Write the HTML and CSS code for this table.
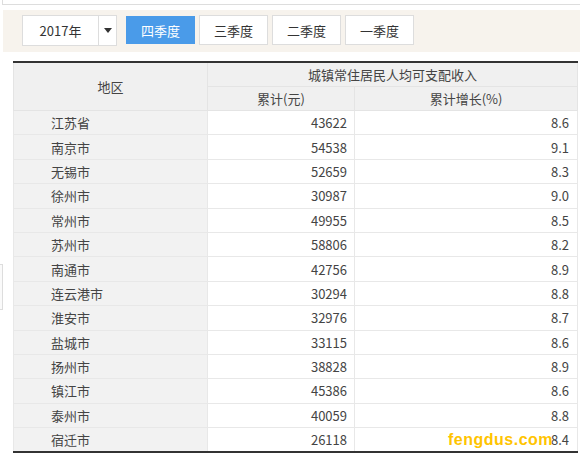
FILE: index.html
```html
<!DOCTYPE html>
<html lang="zh-CN">
<head>
<meta charset="utf-8">
<link rel="stylesheet" href="styles.css">
</head>
<body>
<div class="topbox"></div>
<div class="edge"></div>
<div class="toolbar">
  <div class="select"><span class="year">2017年</span><span class="arrow"></span></div>
  <button class="btn active">四季度</button>
  <button class="btn">三季度</button>
  <button class="btn">二季度</button>
  <button class="btn">一季度</button>
</div>
<div class="tablewrap">
<table class="data">
  <colgroup><col class="col1"><col class="col2"><col class="col3"></colgroup>
  <thead>
    <tr class="h1"><th rowspan="2">地区</th><th colspan="2">城镇常住居民人均可支配收入</th></tr>
    <tr class="h2"><th>累计(元)</th><th>累计增长(%)</th></tr>
  </thead>
  <tbody>
    <tr><td class="name">江苏省</td><td>43622</td><td>8.6</td></tr>
    <tr><td class="name">南京市</td><td>54538</td><td>9.1</td></tr>
    <tr><td class="name">无锡市</td><td>52659</td><td>8.3</td></tr>
    <tr><td class="name">徐州市</td><td>30987</td><td>9.0</td></tr>
    <tr><td class="name">常州市</td><td>49955</td><td>8.5</td></tr>
    <tr><td class="name">苏州市</td><td>58806</td><td>8.2</td></tr>
    <tr><td class="name">南通市</td><td>42756</td><td>8.9</td></tr>
    <tr><td class="name">连云港市</td><td>30294</td><td>8.8</td></tr>
    <tr><td class="name">淮安市</td><td>32976</td><td>8.7</td></tr>
    <tr><td class="name">盐城市</td><td>33115</td><td>8.6</td></tr>
    <tr><td class="name">扬州市</td><td>38828</td><td>8.9</td></tr>
    <tr><td class="name">镇江市</td><td>45386</td><td>8.6</td></tr>
    <tr><td class="name">泰州市</td><td>40059</td><td>8.8</td></tr>
    <tr><td class="name">宿迁市</td><td>26118</td><td>8.4</td></tr>
  </tbody>
</table>
<div class="watermark">fengdus.com</div>
</div>
</body>
</html>
```
FILE: styles.css
```css
html, body {
  margin: 0;
  padding: 0;
  background: #fff;
  font-family: "Noto Sans CJK SC", "Noto Sans", sans-serif;
  color: #444;
  font-size: 13px;
  overflow: hidden;
}
.topbox {
  height: 4px;
  margin-left: 2px;
  border: 1px solid #ddd;
  border-top: none;
  border-right: none;
}
.edge {
  position: absolute;
  left: 0;
  top: 264px;
  width: 2px;
  height: 44px;
  border: 1px solid #ddd;
  border-left: none;
  background: #fafafa;
}
.toolbar {
  margin: 5px 0 0 3px;
  height: 42px;
  background: #f7f3ed;
  display: flex;
  align-items: flex-start;
  padding: 5px 0 0 19px;
  box-sizing: border-box;
  gap: 4px;
}
.select {
  width: 95px;
  height: 31px;
  box-sizing: border-box;
  border: 1px solid #ddd;
  background: #fff;
  display: flex;
  margin-right: 5px;
}
.year {
  width: 75px;
  border-right: 1px solid #ddd;
  display: flex;
  align-items: center;
  justify-content: center;
  font-size: 13px;
  color: #333;
}
.arrow {
  flex: 1;
  display: flex;
  align-items: center;
  justify-content: center;
}
.arrow::before {
  content: "";
  border-left: 4px solid transparent;
  border-right: 4px solid transparent;
  border-top: 5px solid #333;
}
.btn {
  width: 69px;
  height: 30px;
  box-sizing: border-box;
  border: 1px solid #ddd;
  background: #fff;
  font-family: inherit;
  font-size: 13px;
  color: #333;
  padding: 0;
  margin: 0;
}
.btn.active {
  background: #4a9be9;
  border-color: #4a9be9;
  color: #fff;
  margin-top: 1px;
  height: 28px;
}
.tablewrap {
  position: relative;
  margin: 9px 3px 0 13px;
}
.data {
  width: 564px;
  border-collapse: collapse;
  table-layout: fixed;
  border-top: 2px solid #333;
  border-bottom: 2px solid #333;
}
.col1 { width: 194px; }
.col2 { width: 147px; }
.col3 { width: 223px; }
.data th {
  background: #f0f0f0;
  font-weight: normal;
  color: #444;
  border: 1px solid #e4e4e4;
  border-top: none;
  height: 23px;
  padding: 0;
  font-size: 13px;
}
.data td {
  height: 23.4px;
  padding: 0 7px 0 0;
  border: 1px solid #e8e8e8;
  text-align: right;
  font-size: 13px;
  color: #444;
}
.data td:last-child {
  padding-right: 8px;
}
.data td.name {
  background: #f2f2f2;
  text-align: left;
  padding-left: 37px;
}
.data tr:last-child td {
  border-bottom: none;
}
.watermark {
  position: absolute;
  left: 435px;
  bottom: 5px;
  font-family: "Liberation Sans", Arial, sans-serif;
  font-weight: bold;
  font-size: 16px;
  line-height: 16px;
  color: #ffc400;
  letter-spacing: 0.5px;
}
```
